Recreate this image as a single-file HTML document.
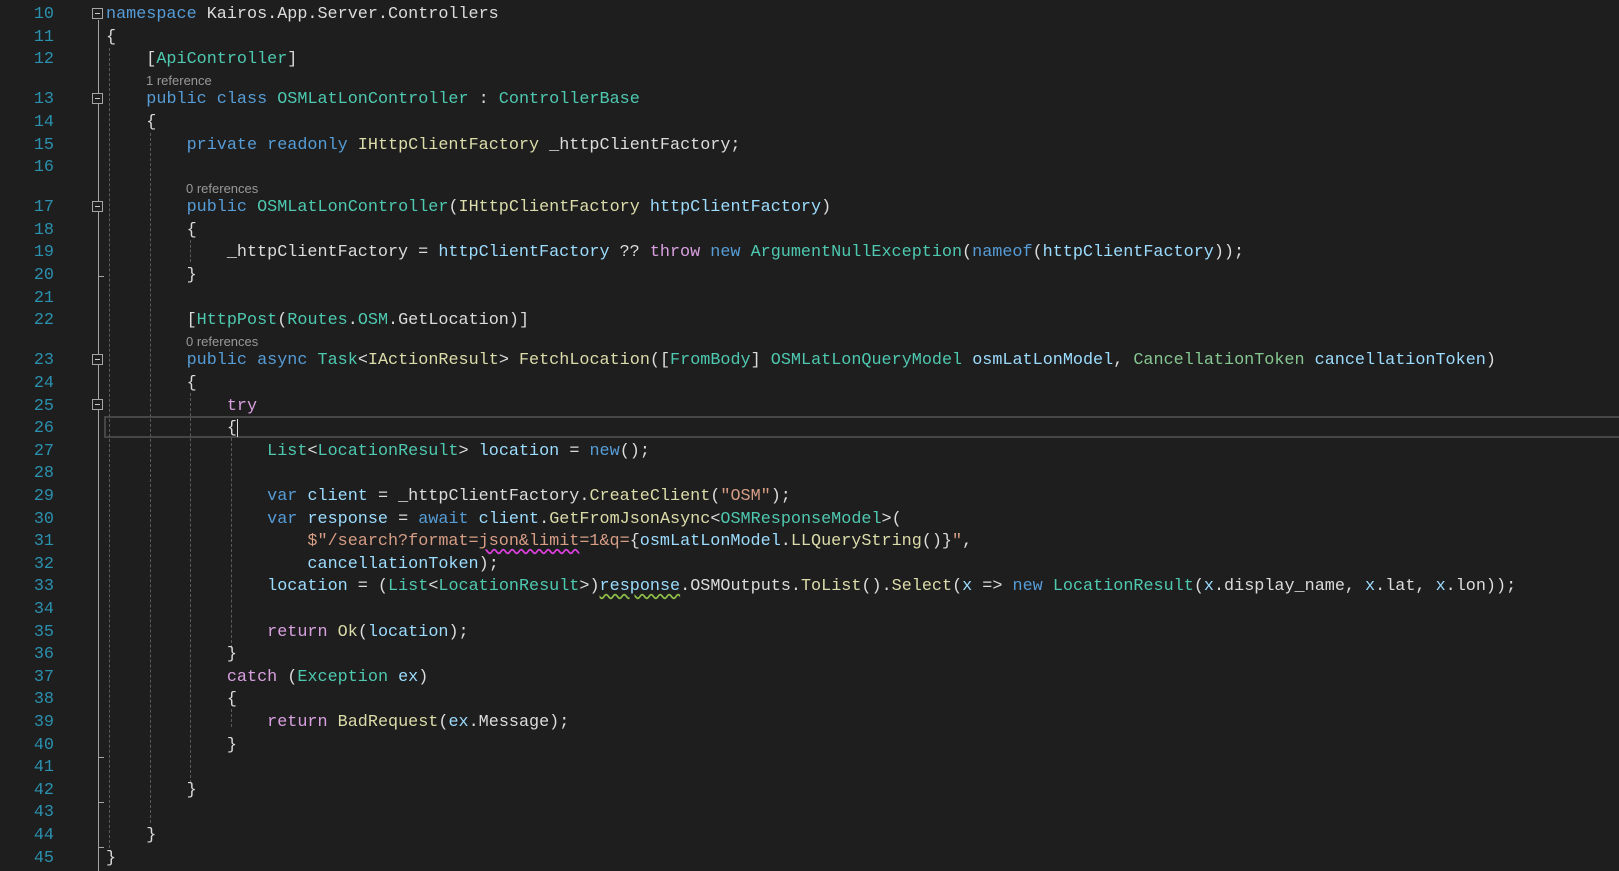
<!DOCTYPE html>
<html><head><meta charset="utf-8">
<style>
html,body{margin:0;padding:0;background:#1e1e1e;width:1619px;height:871px;overflow:hidden;position:relative}
#w{position:absolute;left:0;top:2px;width:1619px;height:871px}
.ln{position:absolute;left:0;width:54px;text-align:right;font-family:"Liberation Mono",monospace;font-size:16.8px;color:#2b91af;height:22.6px;line-height:22.6px}
.c{position:absolute;left:106px;white-space:pre;font-family:"Liberation Mono",monospace;font-size:16.8px;color:#dcdcdc;height:22.6px;line-height:22.6px}
.lens{position:absolute;font-family:"Liberation Sans",sans-serif;font-size:13px;color:#999;line-height:17.5px}
.k{color:#569cd6}.t{color:#4ec9b0}.s{color:#86c691}.m{color:#dcdcaa}.p{color:#9cdcfe}.f{color:#d8a0df}.str{color:#d69d85}
.g{position:absolute;width:0;border-left:1px dashed #5a5a5a}
.box{position:absolute;left:92px;width:9px;height:9px;border:1px solid #a5a5a5;background:#1e1e1e}
.box:after{content:"";position:absolute;left:2px;top:4px;width:5px;height:1px;background:#c8c8c8}
.tick{position:absolute;left:98px;width:6px;height:1px;background:#a5a5a5}
.wr{text-decoration:underline wavy #e040e0;text-underline-offset:3px}
.wg{text-decoration:underline wavy #8fc04a;text-underline-offset:3px}
</style></head><body><div id="w">
<div style="position:absolute;left:104px;top:414px;width:1520px;height:18px;border:2px solid #464646"></div>
<div style="position:absolute;left:98px;top:18px;width:1px;height:851px;background:#a5a5a5"></div>
<div class="tick" style="top:274px"></div>
<div class="tick" style="top:755px"></div>
<div class="tick" style="top:800px"></div>
<div class="tick" style="top:845px"></div>
<div class="box" style="top:6px"></div>
<div class="box" style="top:91px"></div>
<div class="box" style="top:199px"></div>
<div class="box" style="top:352px"></div>
<div class="box" style="top:397px"></div>
<div class="g" style="left:109px;top:46px;height:800px"></div>
<div class="g" style="left:150px;top:131px;height:690px"></div>
<div class="g" style="left:190px;top:238px;height:22px"></div>
<div class="g" style="left:190px;top:391px;height:390px"></div>
<div class="g" style="left:231px;top:436px;height:210px"></div>
<div class="g" style="left:231px;top:707px;height:18px"></div>

<div class="ln" style="top:2px">10</div><div class="c" style="top:2px"><span class="k">namespace</span> Kairos.App.Server.Controllers</div>
<div class="ln" style="top:24.6px">11</div><div class="c" style="top:24.6px">{</div>
<div class="ln" style="top:47.2px">12</div><div class="c" style="top:47.2px">    [<span class="t">ApiController</span>]</div>
<div class="lens" style="left:146px;top:70px">1 reference</div>
<div class="ln" style="top:87.3px">13</div><div class="c" style="top:87.3px">    <span class="k">public class</span> <span class="t">OSMLatLonController</span> : <span class="t">ControllerBase</span></div>
<div class="ln" style="top:109.9px">14</div><div class="c" style="top:109.9px">    {</div>
<div class="ln" style="top:132.5px">15</div><div class="c" style="top:132.5px">        <span class="k">private readonly</span> <span class="m">IHttpClientFactory</span> _httpClientFactory;</div>
<div class="ln" style="top:155.1px">16</div>
<div class="lens" style="left:186px;top:178px">0 references</div>
<div class="ln" style="top:195.2px">17</div><div class="c" style="top:195.2px">        <span class="k">public</span> <span class="t">OSMLatLonController</span>(<span class="m">IHttpClientFactory</span> <span class="p">httpClientFactory</span>)</div>
<div class="ln" style="top:217.8px">18</div><div class="c" style="top:217.8px">        {</div>
<div class="ln" style="top:240.4px">19</div><div class="c" style="top:240.4px">            _httpClientFactory = <span class="p">httpClientFactory</span> ?? <span class="f">throw</span> <span class="k">new</span> <span class="t">ArgumentNullException</span>(<span class="k">nameof</span>(<span class="p">httpClientFactory</span>));</div>
<div class="ln" style="top:263px">20</div><div class="c" style="top:263px">        }</div>
<div class="ln" style="top:285.6px">21</div>
<div class="ln" style="top:308.2px">22</div><div class="c" style="top:308.2px">        [<span class="t">HttpPost</span>(<span class="t">Routes</span>.<span class="t">OSM</span>.GetLocation)]</div>
<div class="lens" style="left:186px;top:331px">0 references</div>
<div class="ln" style="top:348.3px">23</div><div class="c" style="top:348.3px">        <span class="k">public async</span> <span class="t">Task</span>&lt;<span class="m">IActionResult</span>&gt; <span class="m">FetchLocation</span>([<span class="t">FromBody</span>] <span class="t">OSMLatLonQueryModel</span> <span class="p">osmLatLonModel</span>, <span class="s">CancellationToken</span> <span class="p">cancellationToken</span>)</div>
<div class="ln" style="top:370.9px">24</div><div class="c" style="top:370.9px">        {</div>
<div class="ln" style="top:393.5px">25</div><div class="c" style="top:393.5px">            <span class="f">try</span></div>
<div class="ln" style="top:416.1px">26</div><div class="c" style="top:416.1px">            {<span style="display:inline-block;width:1px;height:18px;background:#dcdcdc;vertical-align:middle"></span></div>
<div class="ln" style="top:438.7px">27</div><div class="c" style="top:438.7px">                <span class="t">List</span>&lt;<span class="t">LocationResult</span>&gt; <span class="p">location</span> = <span class="k">new</span>();</div>
<div class="ln" style="top:461.3px">28</div>
<div class="ln" style="top:483.9px">29</div><div class="c" style="top:483.9px">                <span class="k">var</span> <span class="p">client</span> = _httpClientFactory.<span class="m">CreateClient</span>(<span class="str">"OSM"</span>);</div>
<div class="ln" style="top:506.5px">30</div><div class="c" style="top:506.5px">                <span class="k">var</span> <span class="p">response</span> = <span class="k">await</span> <span class="p">client</span>.<span class="m">GetFromJsonAsync</span>&lt;<span class="t">OSMResponseModel</span>&gt;(</div>
<div class="ln" style="top:529.1px">31</div><div class="c" style="top:529.1px">                    <span class="str">$"/search?format=<span class="wr">json&amp;limit</span>=1&amp;q=</span>{<span class="p">osmLatLonModel</span>.<span class="m">LLQueryString</span>()}<span class="str">"</span>,</div>
<div class="ln" style="top:551.7px">32</div><div class="c" style="top:551.7px">                    <span class="p">cancellationToken</span>);</div>
<div class="ln" style="top:574.3px">33</div><div class="c" style="top:574.3px">                <span class="p">location</span> = (<span class="t">List</span>&lt;<span class="t">LocationResult</span>&gt;)<span class="p wg">response</span>.OSMOutputs.<span class="m">ToList</span>().<span class="m">Select</span>(<span class="p">x</span> =&gt; <span class="k">new</span> <span class="t">LocationResult</span>(<span class="p">x</span>.display_name, <span class="p">x</span>.lat, <span class="p">x</span>.lon));</div>
<div class="ln" style="top:596.9px">34</div>
<div class="ln" style="top:619.5px">35</div><div class="c" style="top:619.5px">                <span class="f">return</span> <span class="m">Ok</span>(<span class="p">location</span>);</div>
<div class="ln" style="top:642.1px">36</div><div class="c" style="top:642.1px">            }</div>
<div class="ln" style="top:664.7px">37</div><div class="c" style="top:664.7px">            <span class="f">catch</span> (<span class="t">Exception</span> <span class="p">ex</span>)</div>
<div class="ln" style="top:687.3px">38</div><div class="c" style="top:687.3px">            {</div>
<div class="ln" style="top:709.9px">39</div><div class="c" style="top:709.9px">                <span class="f">return</span> <span class="m">BadRequest</span>(<span class="p">ex</span>.Message);</div>
<div class="ln" style="top:732.5px">40</div><div class="c" style="top:732.5px">            }</div>
<div class="ln" style="top:755.1px">41</div>
<div class="ln" style="top:777.7px">42</div><div class="c" style="top:777.7px">        }</div>
<div class="ln" style="top:800.3px">43</div>
<div class="ln" style="top:822.9px">44</div><div class="c" style="top:822.9px">    }</div>
<div class="ln" style="top:845.5px">45</div><div class="c" style="top:845.5px">}</div>
</div></body></html>
